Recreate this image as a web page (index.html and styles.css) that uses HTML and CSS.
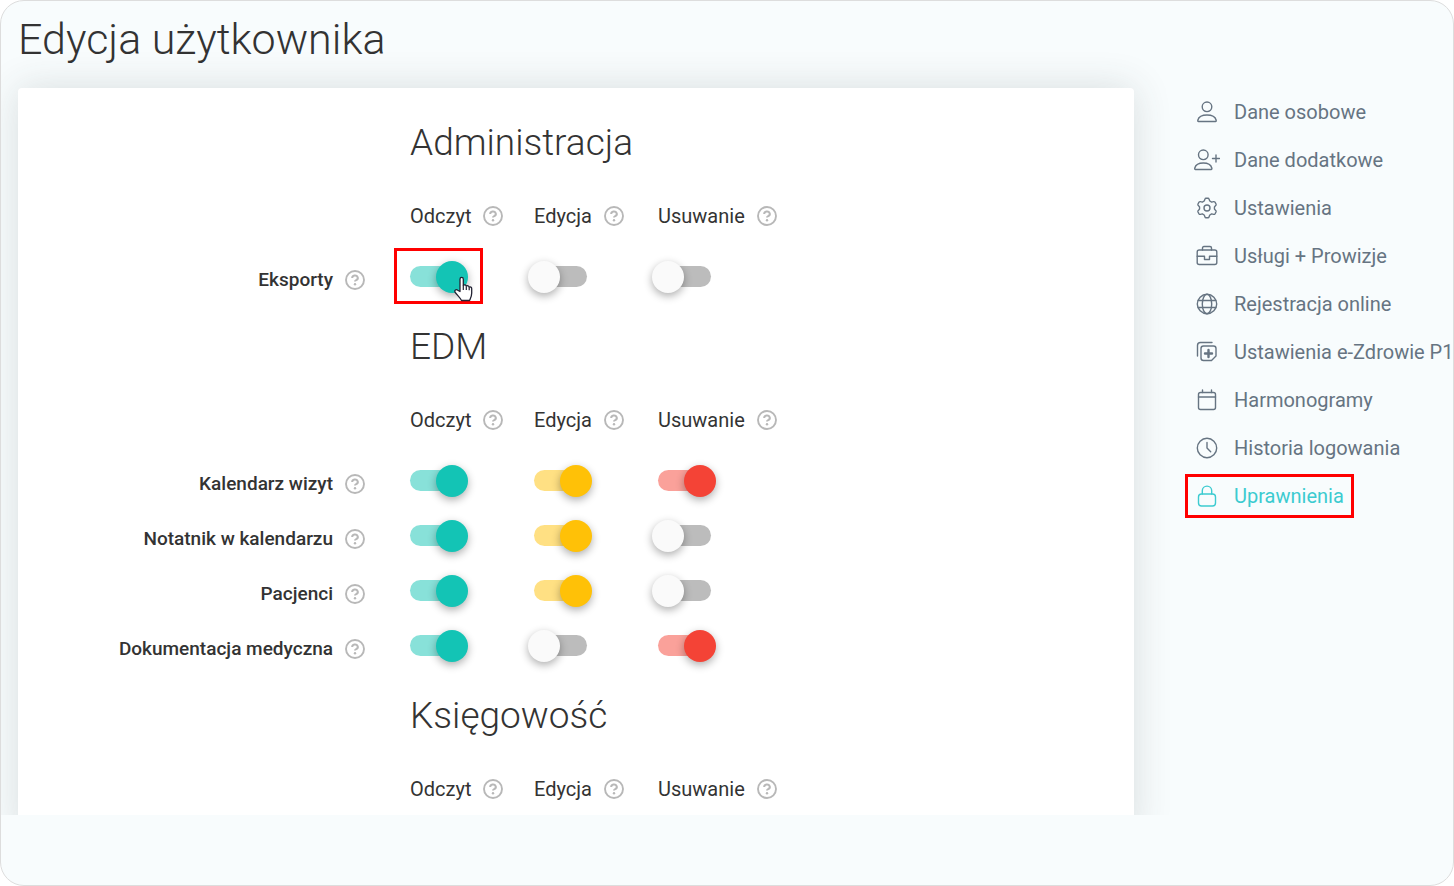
FILE: index.html
```html
<!DOCTYPE html>
<html lang="pl">
<head>
<meta charset="utf-8">
<meta name="viewport" content="width=device-width, initial-scale=1">
<title>Edycja użytkownika</title>
<link rel="stylesheet" href="styles.css">
</head>
<body>
<svg class="sprite" aria-hidden="true">
  <symbol id="help" viewBox="0 0 20 20"><circle cx="10" cy="10" r="9" fill="none" stroke="currentColor" stroke-width="1.9"/><path d="M7.200 8a2.800 2.400 0 1 1 4.100 2c-.9.500-1.300.8-1.300 1.600" fill="none" stroke="currentColor" stroke-width="2"/><circle cx="10" cy="14.200" r="1.200" fill="currentColor"/></symbol>
</svg>
<div class="frame">
  <div class="viewport">
    <h1 class="title">Edycja użytkownika</h1>
    <div class="layout">
      <main class="card">
        <table class="perms">
          <caption>Administracja</caption>
          <colgroup><col class="col-name"><col class="col-perm"><col class="col-perm"><col></colgroup>
          <thead>
            <tr>
              <td></td>
              <th scope="col"><span class="label">Odczyt <button class="help" type="button" aria-label="Pomoc: Odczyt"><svg><use href="#help"/></svg></button></span></th>
              <th scope="col"><span class="label">Edycja <button class="help" type="button" aria-label="Pomoc: Edycja"><svg><use href="#help"/></svg></button></span></th>
              <th scope="col"><span class="label">Usuwanie <button class="help" type="button" aria-label="Pomoc: Usuwanie"><svg><use href="#help"/></svg></button></span></th>
            </tr>
          </thead>
          <tbody>
            <tr>
              <th scope="row"><span class="label">Eksporty <button class="help" type="button" aria-label="Pomoc: Eksporty"><svg><use href="#help"/></svg></button></span></th>
              <td class="marked"><input class="toggle read" type="checkbox" aria-label="Eksporty: odczyt" checked>
                <span class="marker"></span>
                <svg class="pointer" viewBox="0 0 20 26" aria-hidden="true"><path d="M7 15.5V3.2C7 .8 10.300.8 10.300 3.200V9.500C11 8.500 13 8.700 13.300 10.200C14.200 9.300 16 9.700 16.200 11.200C17.300 10.500 18.700 11.200 18.700 12.700V17C18.700 21 17.500 22.500 16.500 24.500H8.500C7 21.500 4 19 2 16.200C1 14.300 3.200 12.900 4.800 14.200Z" fill="#fff" stroke="#223" stroke-width="1.300" stroke-linejoin="round"/><path d="M10.300 9.500V14M13.300 10.500V14M16.200 11.300V14.300" fill="none" stroke="#223" stroke-width="1.200"/></svg>
              </td>
              <td><input class="toggle edit" type="checkbox" aria-label="Eksporty: edycja"></td>
              <td><input class="toggle remove" type="checkbox" aria-label="Eksporty: usuwanie"></td>
            </tr>
          </tbody>
        </table>

        <table class="perms">
          <caption>EDM</caption>
          <colgroup><col class="col-name"><col class="col-perm"><col class="col-perm"><col></colgroup>
          <thead>
            <tr>
              <td></td>
              <th scope="col"><span class="label">Odczyt <button class="help" type="button" aria-label="Pomoc: Odczyt"><svg><use href="#help"/></svg></button></span></th>
              <th scope="col"><span class="label">Edycja <button class="help" type="button" aria-label="Pomoc: Edycja"><svg><use href="#help"/></svg></button></span></th>
              <th scope="col"><span class="label">Usuwanie <button class="help" type="button" aria-label="Pomoc: Usuwanie"><svg><use href="#help"/></svg></button></span></th>
            </tr>
          </thead>
          <tbody>
            <tr>
              <th scope="row"><span class="label">Kalendarz wizyt <button class="help" type="button" aria-label="Pomoc: Kalendarz wizyt"><svg><use href="#help"/></svg></button></span></th>
              <td><input class="toggle read" type="checkbox" aria-label="Kalendarz wizyt: odczyt" checked></td>
              <td><input class="toggle edit" type="checkbox" aria-label="Kalendarz wizyt: edycja" checked></td>
              <td><input class="toggle remove" type="checkbox" aria-label="Kalendarz wizyt: usuwanie" checked></td>
            </tr>
            <tr>
              <th scope="row"><span class="label">Notatnik w kalendarzu <button class="help" type="button" aria-label="Pomoc: Notatnik w kalendarzu"><svg><use href="#help"/></svg></button></span></th>
              <td><input class="toggle read" type="checkbox" aria-label="Notatnik w kalendarzu: odczyt" checked></td>
              <td><input class="toggle edit" type="checkbox" aria-label="Notatnik w kalendarzu: edycja" checked></td>
              <td><input class="toggle remove" type="checkbox" aria-label="Notatnik w kalendarzu: usuwanie"></td>
            </tr>
            <tr>
              <th scope="row"><span class="label">Pacjenci <button class="help" type="button" aria-label="Pomoc: Pacjenci"><svg><use href="#help"/></svg></button></span></th>
              <td><input class="toggle read" type="checkbox" aria-label="Pacjenci: odczyt" checked></td>
              <td><input class="toggle edit" type="checkbox" aria-label="Pacjenci: edycja" checked></td>
              <td><input class="toggle remove" type="checkbox" aria-label="Pacjenci: usuwanie"></td>
            </tr>
            <tr>
              <th scope="row"><span class="label">Dokumentacja medyczna <button class="help" type="button" aria-label="Pomoc: Dokumentacja medyczna"><svg><use href="#help"/></svg></button></span></th>
              <td><input class="toggle read" type="checkbox" aria-label="Dokumentacja medyczna: odczyt" checked></td>
              <td><input class="toggle edit" type="checkbox" aria-label="Dokumentacja medyczna: edycja"></td>
              <td><input class="toggle remove" type="checkbox" aria-label="Dokumentacja medyczna: usuwanie" checked></td>
            </tr>
          </tbody>
        </table>

        <table class="perms">
          <caption>Księgowość</caption>
          <colgroup><col class="col-name"><col class="col-perm"><col class="col-perm"><col></colgroup>
          <thead>
            <tr>
              <td></td>
              <th scope="col"><span class="label">Odczyt <button class="help" type="button" aria-label="Pomoc: Odczyt"><svg><use href="#help"/></svg></button></span></th>
              <th scope="col"><span class="label">Edycja <button class="help" type="button" aria-label="Pomoc: Edycja"><svg><use href="#help"/></svg></button></span></th>
              <th scope="col"><span class="label">Usuwanie <button class="help" type="button" aria-label="Pomoc: Usuwanie"><svg><use href="#help"/></svg></button></span></th>
            </tr>
          </thead>
        </table>
      </main>

      <nav class="menu" aria-label="Ustawienia użytkownika">
        <a href="#osobowe"><svg viewBox="0 0 26 22"><circle cx="13" cy="5.800" r="4.800"/><path d="M4.500 20.500c-.8 0-.8-.6-.6-1.500.8-3 4-5 9.100-5s8.300 2 9.100 5c.2.900.2 1.500-.6 1.500z"/></svg>Dane osobowe</a>
        <a href="#dodatkowe"><svg viewBox="0 0 26 22"><circle cx="9.300" cy="5.800" r="4.800"/><path d="M1.500 20.500c-.8 0-.9-.6-.7-1.500.8-3 3.800-5 8.500-5s7.700 2 8.500 5c.2.900.1 1.500-.7 1.500zM18.500 9.500h7M22 6v7"/></svg>Dane dodatkowe</a>
        <a href="#ustawienia"><svg viewBox="0 0 26 22"><circle cx="13" cy="11" r="3"/><path d="M10.200 4L11 2Q11.200 1.300 12 1.300H14Q14.800 1.300 15 2L15.800 4L17.660 5.080L19.700 4.600Q20.500 4.500 21 5.200L22 7Q22.300 7.700 21.900 8.200L20.460 9.920V12.080L21.900 13.800Q22.300 14.300 22 15L21 16.800Q20.500 17.500 19.700 17.400L17.660 16.920L15.800 18L15 20Q14.800 20.700 14 20.700H12Q11.200 20.700 11 20L10.200 18L8.340 16.920L6.300 17.400Q5.500 17.500 5 16.800L4 15Q3.700 14.300 4.100 13.800L5.540 12.080V9.920L4.100 8.200Q3.700 7.700 4 7L5 5.200Q5.500 4.500 6.300 4.600L8.340 5.080Z"/></svg>Ustawienia</a>
        <a href="#uslugi"><svg viewBox="0 0 26 22"><rect x="3.200" y="5" width="19.600" height="14.500" rx="2"/><path d="M8.500 5V3q0-1.500 1.500-1.500h6q1.500 0 1.500 1.500v2M3.200 11.200h7.300v3.300h5v-3.300h7.300"/></svg>Usługi + Prowizje</a>
        <a href="#rejestracja"><svg viewBox="0 0 26 22"><circle cx="13" cy="11" r="9.700"/><ellipse cx="13" cy="11" rx="4.700" ry="9.700"/><path d="M4.300 7.500h17.400M4.300 14.500h17.400"/></svg>Rejestracja online</a>
        <a href="#p1"><svg viewBox="0 0 26 22"><path d="M3.500 15V4.500q0-3 3-3H18M9.500 5H19.500Q22 5 22 7.500V15L17.500 19.500H9.500Q7 19.500 7 17V7.500Q7 5 9.500 5Z"/><path class="bold" d="M14.500 9v7M11 12.500h7"/></svg>Ustawienia e-Zdrowie P1</a>
        <a href="#harmonogramy"><svg viewBox="0 0 26 22"><rect x="4.500" y="3.500" width="17" height="17" rx="2"/><path d="M4.500 8h17M8.500 1v2.500M17.500 1v2.500"/></svg>Harmonogramy</a>
        <a href="#historia"><svg viewBox="0 0 26 22"><circle cx="13" cy="11" r="9.700"/><path d="M13 5.500V11l3.700 3.700"/></svg>Historia logowania</a>
        <a class="active" href="#uprawnienia" aria-current="page"><svg viewBox="0 0 26 22"><rect x="4.500" y="9" width="17" height="12" rx="3"/><path d="M8.300 9V5.800a4.700 4.700 0 0 1 9.400 0V9"/></svg>Uprawnienia</a>
      </nav>
    </div>
  </div>
</div>
</body>
</html>
```
FILE: styles.css
```css
* { box-sizing: border-box; }

body {
  margin: 0;
  background: #fff;
  color: #333;
  font-family: Roboto, "Noto Sans", sans-serif;
  font-size: 20px;
  line-height: 24px;
}

.sprite { position: absolute; width: 0; height: 0; }

.frame {
  display: flex;
  height: 100vh;
  padding-bottom: 70px;
  border: 1px solid #ddd;
  border-radius: 24px;
  background: #f8fcfd;
  overflow: hidden;
}

.viewport {
  flex: 1;
  min-width: 0;
  padding-left: 17px;
  overflow: hidden;
}

.title {
  margin: 0 0 19px;
  padding-top: 8px;
  font-size: 43px;
  line-height: 60px;
  font-weight: 300;
}

.layout {
  display: grid;
  grid-template-columns: minmax(0, 1fr) 268px;
  gap: 51px;
}

.card {
  padding-top: 28px;
  border-radius: 4px;
  background: #fff;
  box-shadow: 0 0 38px rgba(50, 60, 60, .16);
}

.perms {
  width: 100%;
  margin-bottom: 16px;
  border-collapse: collapse;
  table-layout: fixed;
}

.col-name { width: 392px; }
.col-perm { width: 124px; }

.perms caption {
  padding: 0 0 16px 392px;
  font-size: 37px;
  line-height: 54px;
  font-weight: 300;
  text-align: left;
}

.perms th,
.perms td {
  height: 55px;
  padding: 0;
  text-align: left;
  vertical-align: middle;
}

.perms thead th,
.perms thead td {
  height: 63px;
  padding-bottom: 4px;
  font-weight: 400;
}

.perms tbody th {
  padding: 7px 45px 0 0;
  font-size: 19px;
  font-weight: 500;
}

.label {
  display: flex;
  align-items: center;
  gap: 12px;
}

tbody .label { justify-content: flex-end; }

.help {
  width: 20px;
  height: 20px;
  padding: 0;
  border: 0;
  background: none;
  color: #b8b8b8;
}

.help svg {
  display: block;
  width: 20px;
  height: 20px;
}

.toggle {
  appearance: none;
  display: flex;
  align-items: center;
  width: 53px;
  height: 21px;
  margin: 0;
  border-radius: 11px;
  background: #bcbcbc;
}

.toggle::before {
  content: "";
  flex: none;
  width: 32px;
  height: 32px;
  margin-left: -6px;
  border-radius: 50%;
  background: #fafafa;
  box-shadow: 0 3px 9px rgba(0, 0, 0, .32);
}

.toggle:checked::before { margin-left: 26px; }
.read:checked { background: #88e1d9; }
.read:checked::before { background: #13c4b5; }
.edit:checked { background: #ffe083; }
.edit:checked::before { background: #ffc107; }
.remove:checked { background: #faa19a; }
.remove:checked::before { background: #f44336; }

.marked { position: relative; }

.marker {
  position: absolute;
  top: -1px;
  left: -16px;
  width: 89px;
  height: 56px;
  border: 3px solid #f00;
}

.pointer {
  position: absolute;
  top: 27px;
  left: 43px;
  width: 20px;
  height: 26px;
}

.menu {
  display: flex;
  flex-direction: column;
  align-items: flex-start;
  gap: 4px;
  padding-top: 2px;
}

.menu a {
  display: flex;
  align-items: center;
  gap: 14px;
  height: 44px;
  padding-left: 9px;
  color: #667482;
  text-decoration: none;
  white-space: nowrap;
}

.menu svg {
  flex: none;
  width: 26px;
  height: 22px;
  fill: none;
  stroke: currentColor;
  stroke-width: 1.4;
  stroke-linecap: round;
  stroke-linejoin: round;
}

.menu .bold { stroke-width: 2.4; }

.menu .active {
  padding-right: 10px;
  color: #3ccbd0;
  box-shadow: inset 0 0 0 3px #f00;
}
```
